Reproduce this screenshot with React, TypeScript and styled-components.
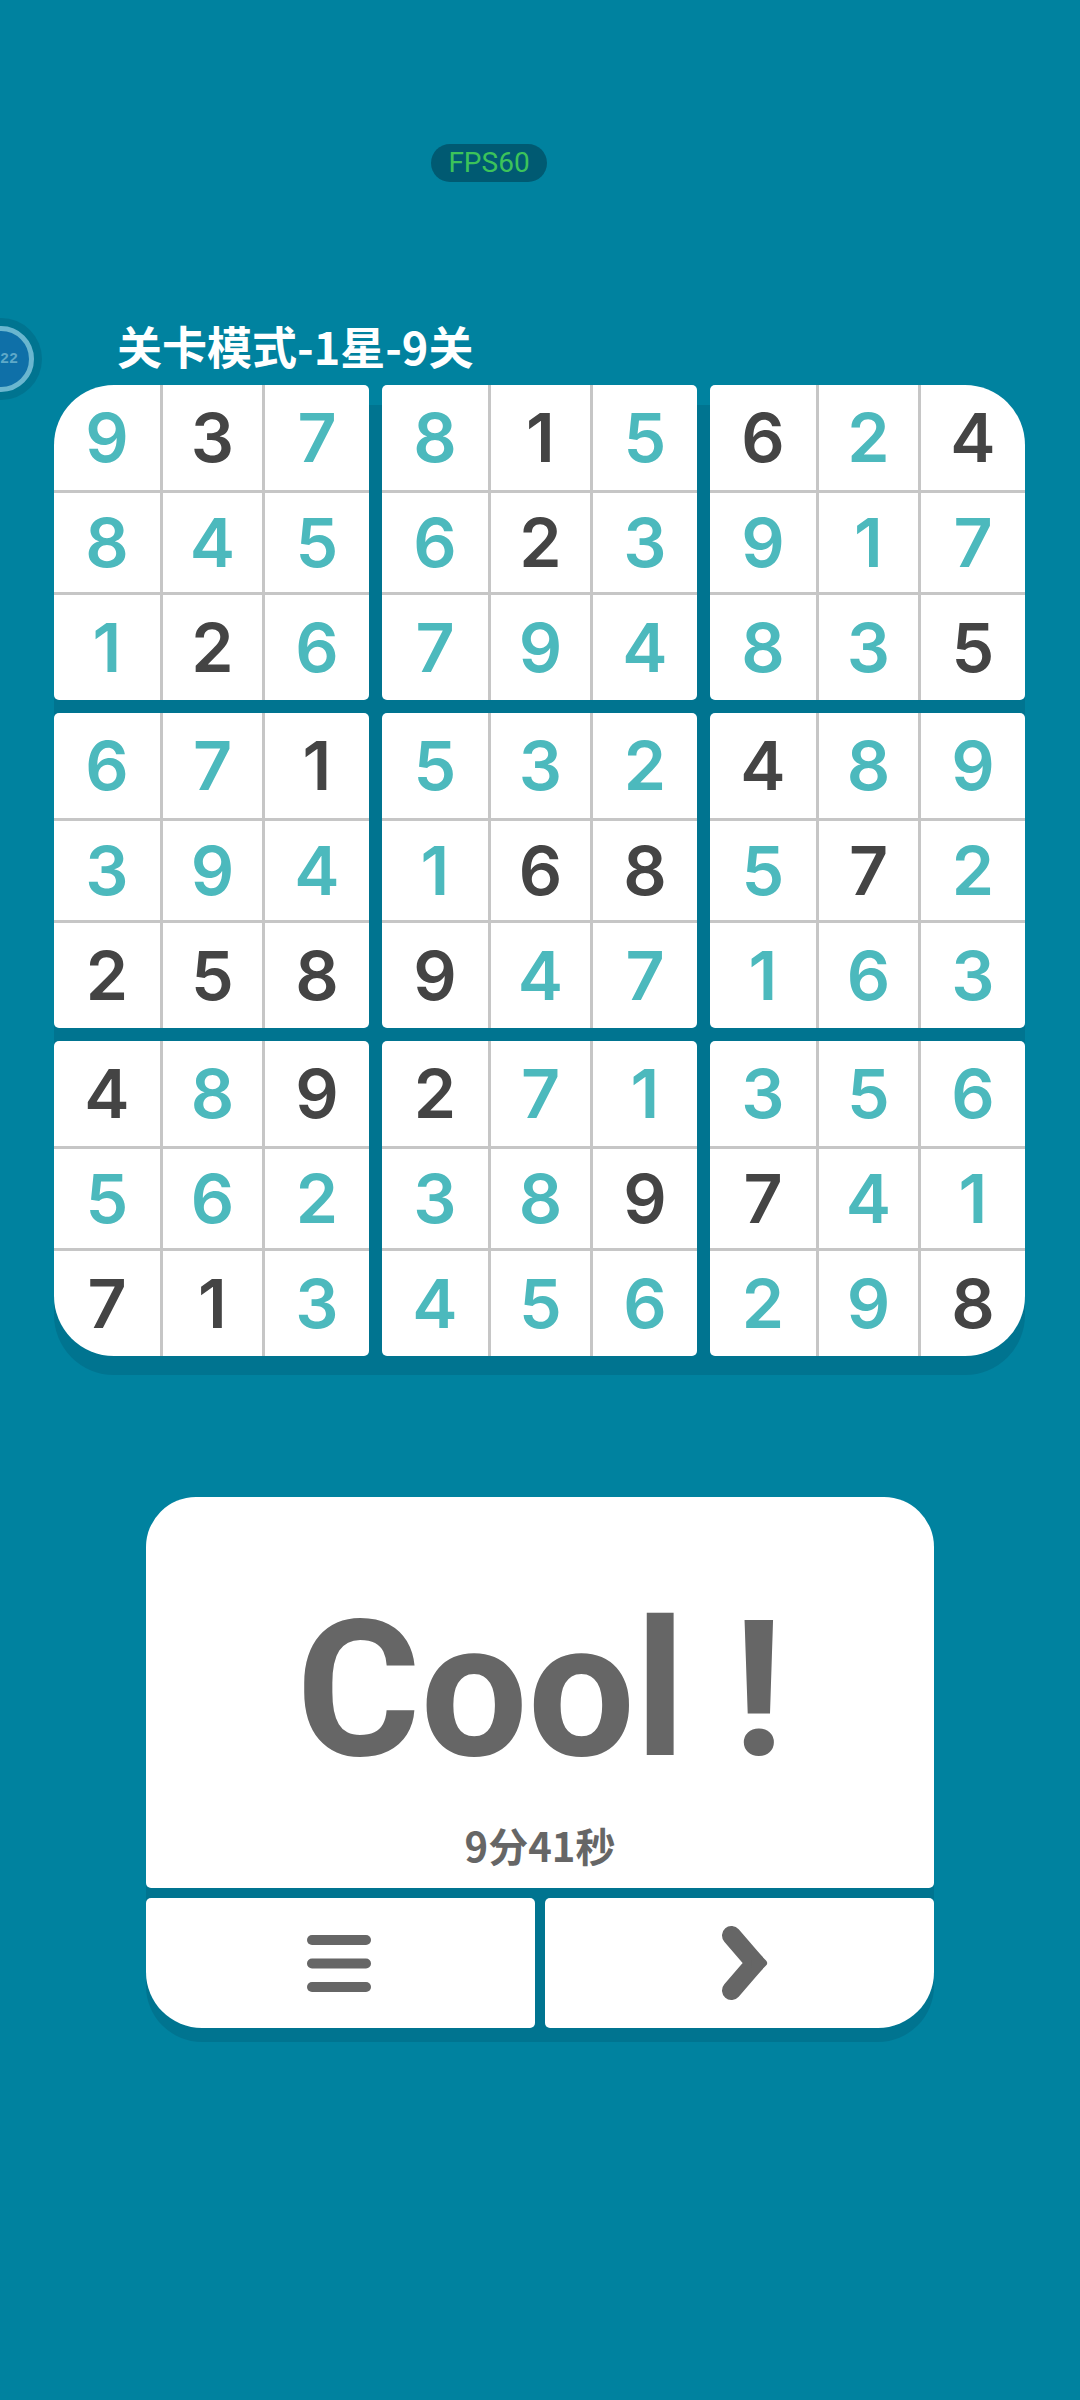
import styled, { createGlobalStyle } from "styled-components";

const BG = "#00829f";
const SHADE = "#007490";
const TEAL = "#4cb9bd";
const INK = "#444444";
const GREY = "#666666";

// 一宫一串，* 表示题面给定的深色数字
const BLOCKS = [
  "93*784512*6",
  "81*562*3794",
  "6*24*917835*",
  "671*3942*5*8*",
  "53216*8*9*47",
  "4*8957*2163",
  "4*89*5627*1*3",
  "2*71389*456",
  "3567*41298*",
];

const parseBlock = (s: string) => {
  const out: { n: string; given: boolean }[] = [];
  for (const c of s) {
    if (c === "*") out[out.length - 1].given = true;
    else out.push({ n: c, given: false });
  }
  return out;
};

const cornerOf: Record<number, string> = {
  0: "60px 5px 5px 5px",
  2: "5px 60px 5px 5px",
  6: "5px 5px 5px 60px",
  8: "5px 5px 60px 5px",
};

export default function App() {
  return (
    <Page>
      <GlobalStyle />
      <Timer>
        <TimerFace>
          <TimerText>22</TimerText>
        </TimerFace>
      </Timer>
      <FpsPill>FPS60</FpsPill>
      <Title>关卡模式-1星-9关</Title>
      <Board>
        {BLOCKS.map((b, i) => (
          <Block key={i} $radius={cornerOf[i] ?? "5px"}>
            {parseBlock(b).map((c, j) => (
              <Cell key={j} $given={c.given}>
                {c.n}
              </Cell>
            ))}
          </Block>
        ))}
      </Board>
      <Result>
        <Summary>
          <Cool>Cool !</Cool>
          <Time>9分41秒</Time>
        </Summary>
        <Actions>
          <ActionButton $radius="5px 5px 5px 56px">
            <svg width="67" height="57" viewBox="0 0 67 57" fill={GREY}>
              <rect x="0" y="0" width="64" height="10" rx="5" />
              <rect x="0" y="23.5" width="64" height="10" rx="5" />
              <rect x="0" y="47" width="64" height="10" rx="5" />
            </svg>
          </ActionButton>
          <ActionButton $radius="5px 5px 56px 5px">
            <svg width="56" height="74" viewBox="-10 0 56 74" fill="none">
              <polyline
                points="9.5,9.5 33.2,37 9.5,64.5"
                stroke={GREY}
                strokeWidth="19"
                strokeLinecap="round"
                strokeLinejoin="round"
              />
              <polygon
                points="41,37 33.2,29.3 33.2,44.7"
                fill={GREY}
                stroke={GREY}
                strokeWidth="8"
                strokeLinejoin="round"
              />
            </svg>
          </ActionButton>
        </Actions>
      </Result>
    </Page>
  );
}

const GlobalStyle = createGlobalStyle`
  html, body {
    margin: 0;
    padding: 0;
    background: ${BG};
  }
`;

const Page = styled.div`
  position: relative;
  width: 1080px;
  height: 2400px;
  overflow: hidden;
  display: flex;
  flex-direction: column;
  background: ${BG};
  font-family: "Noto Sans CJK SC", "Noto Sans", sans-serif;
`;

const Timer = styled.div`
  position: absolute;
  left: -40px;
  top: 318px;
  width: 82px;
  height: 82px;
  border-radius: 50%;
  background: ${SHADE};
  display: flex;
  align-items: center;
  justify-content: center;
`;

const TimerFace = styled.div`
  position: relative;
  box-sizing: border-box;
  width: 66px;
  height: 66px;
  border-radius: 50%;
  border: 5px solid #6ab6cf;
  background: #0f70a8;
`;

const TimerText = styled.span`
  position: absolute;
  left: 27px;
  top: 19px;
  font-family: "Liberation Mono", monospace;
  font-size: 15px;
  font-weight: 700;
  line-height: 20px;
  color: #5ea9c8;
`;

const FpsPill = styled.div`
  align-self: flex-start;
  margin: 144px 0 0 431px;
  width: 116px;
  height: 38px;
  border-radius: 19px;
  background: #005a72;
  color: #3cc35a;
  font-family: Roboto, sans-serif;
  font-size: 28px;
  line-height: 38px;
  text-align: center;
`;

const Title = styled.h1`
  margin: 132px 0 7px 117px;
  height: 64px;
  font-size: 45px;
  font-weight: 700;
  line-height: 64px;
  color: #ffffff;
`;

const Board = styled.div`
  align-self: flex-start;
  margin-left: 54px;
  display: grid;
  grid-template-columns: repeat(3, 315px);
  grid-auto-rows: 315px;
  gap: 13px;
  border-radius: 60px;
  background: linear-gradient(to bottom, ${BG} 20px, ${SHADE} 20px);
  box-shadow: 0 19px 0 ${SHADE};
`;

const Block = styled.div<{ $radius: string }>`
  display: grid;
  grid-template-columns: 109px 102px 104px;
  grid-template-rows: 108px 102px 105px;
  overflow: hidden;
  border-radius: ${(p) => p.$radius};
  background: #ffffff;
`;

const Cell = styled.div<{ $given: boolean }>`
  display: flex;
  align-items: center;
  justify-content: center;
  padding-bottom: 2px;
  font-family: Inter, sans-serif;
  font-size: 68px;
  font-weight: 600;
  color: ${(p) => (p.$given ? INK : TEAL)};
  border-style: solid;
  border-color: #c6c6c6;
  border-width: 0;
  &:not(:nth-child(3n)) {
    border-right-width: 3px;
  }
  &:nth-child(-n + 6) {
    border-bottom-width: 3px;
  }
`;

const Result = styled.div`
  align-self: flex-start;
  margin: 141px 0 0 146px;
  width: 788px;
  display: flex;
  flex-direction: column;
  gap: 10px;
  border-radius: 50px 50px 56px 56px;
  background: linear-gradient(to bottom, ${BG} 100px, ${SHADE} 100px);
  box-shadow: 0 14px 0 ${SHADE};
`;

const Summary = styled.div`
  height: 391px;
  display: flex;
  flex-direction: column;
  align-items: center;
  border-radius: 50px 50px 5px 5px;
  background: #ffffff;
  color: ${GREY};
`;

const Cool = styled.div`
  margin-top: 79px;
  font-family: Roboto, sans-serif;
  font-size: 190px;
  font-weight: 700;
  line-height: 228px;
  white-space: pre;
`;

const Time = styled.div`
  margin-top: 11px;
  font-size: 40px;
  font-weight: 700;
  line-height: 60px;
`;

const Actions = styled.div`
  display: grid;
  grid-template-columns: 1fr 1fr;
  gap: 10px;
`;

const ActionButton = styled.div<{ $radius: string }>`
  height: 130px;
  display: flex;
  align-items: center;
  justify-content: center;
  border-radius: ${(p) => p.$radius};
  background: #ffffff;
`;
